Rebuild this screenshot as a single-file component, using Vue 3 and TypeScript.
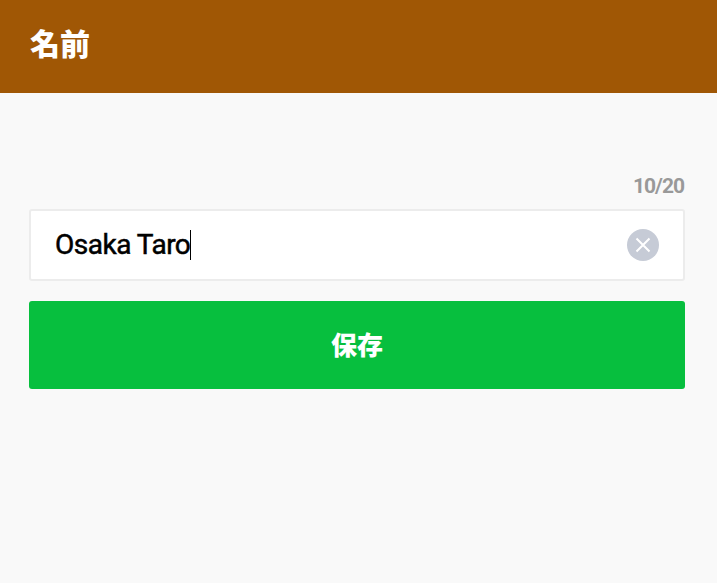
<script setup lang="ts">
import { ref } from 'vue'
const title = ref('名前')
const name = ref('Osaka Taro')
const limit = 20
</script>

<template>
  <div class="page">
    <header class="bar"><h1 class="title">{{ title }}</h1></header>
    <main class="body">
      <div class="count">{{ name.length }}/{{ limit }}</div>
      <div class="field">
        <span class="value">{{ name }}</span><span class="caret"></span>
        <span class="clear">
          <svg viewBox="0 0 32 32" width="32" height="32">
            <circle cx="16" cy="16" r="16" fill="#c6cbd6" />
            <path d="M9.5 9.5 22.5 22.5M22.5 9.5 9.5 22.5" stroke="#fff" stroke-width="2" fill="none" />
          </svg>
        </span>
      </div>
      <button class="save">保存</button>
    </main>
  </div>
</template>

<style>
html, body { margin: 0; background: #f9f9f9; }
</style>

<style scoped>
.page {
  width: 717px;
  height: 583px;
  background: #f9f9f9;
  font-family: "Roboto", "Noto Sans CJK JP", sans-serif;
  overflow: hidden;
}
.bar {
  height: 93px;
  background: #a05705;
  display: flex;
  align-items: center;
  padding-left: 30px;
  box-sizing: border-box;
}
.title {
  margin: 0;
  color: #fff;
  font-size: 30px;
  font-weight: 900;
  line-height: 1;
  padding-bottom: 4px;
}
.body {
  padding: 0 32px 0 29px;
  display: flex;
  flex-direction: column;
}
.count {
  margin-top: 80px;
  height: 36px;
  text-align: right;
  color: #999;
  font-size: 21px;
  font-weight: 700;
  line-height: 26px;
  letter-spacing: -1px;
  padding-right: 1px;
}
.field {
  height: 72px;
  box-sizing: border-box;
  background: #fff;
  border: 2px solid #ececec;
  border-radius: 3px;
  display: flex;
  align-items: center;
  padding: 0 24px 0 24px;
  color: #000;
}
.value {
  font-size: 28px;
  font-weight: 400;
  line-height: 32px;
  letter-spacing: -0.5px;
  -webkit-text-stroke: 0.5px #000;
}
.caret {
  width: 1px;
  height: 30px;
  background: #000;
}
.clear {
  margin-left: auto;
  display: flex;
}
.save {
  margin-top: 20px;
  height: 88px;
  border: 0;
  border-radius: 3px;
  background: #07bf3e;
  color: #fff;
  font-family: inherit;
  font-size: 26px;
  font-weight: 900;
  padding: 0 0 4px;
}
</style>
